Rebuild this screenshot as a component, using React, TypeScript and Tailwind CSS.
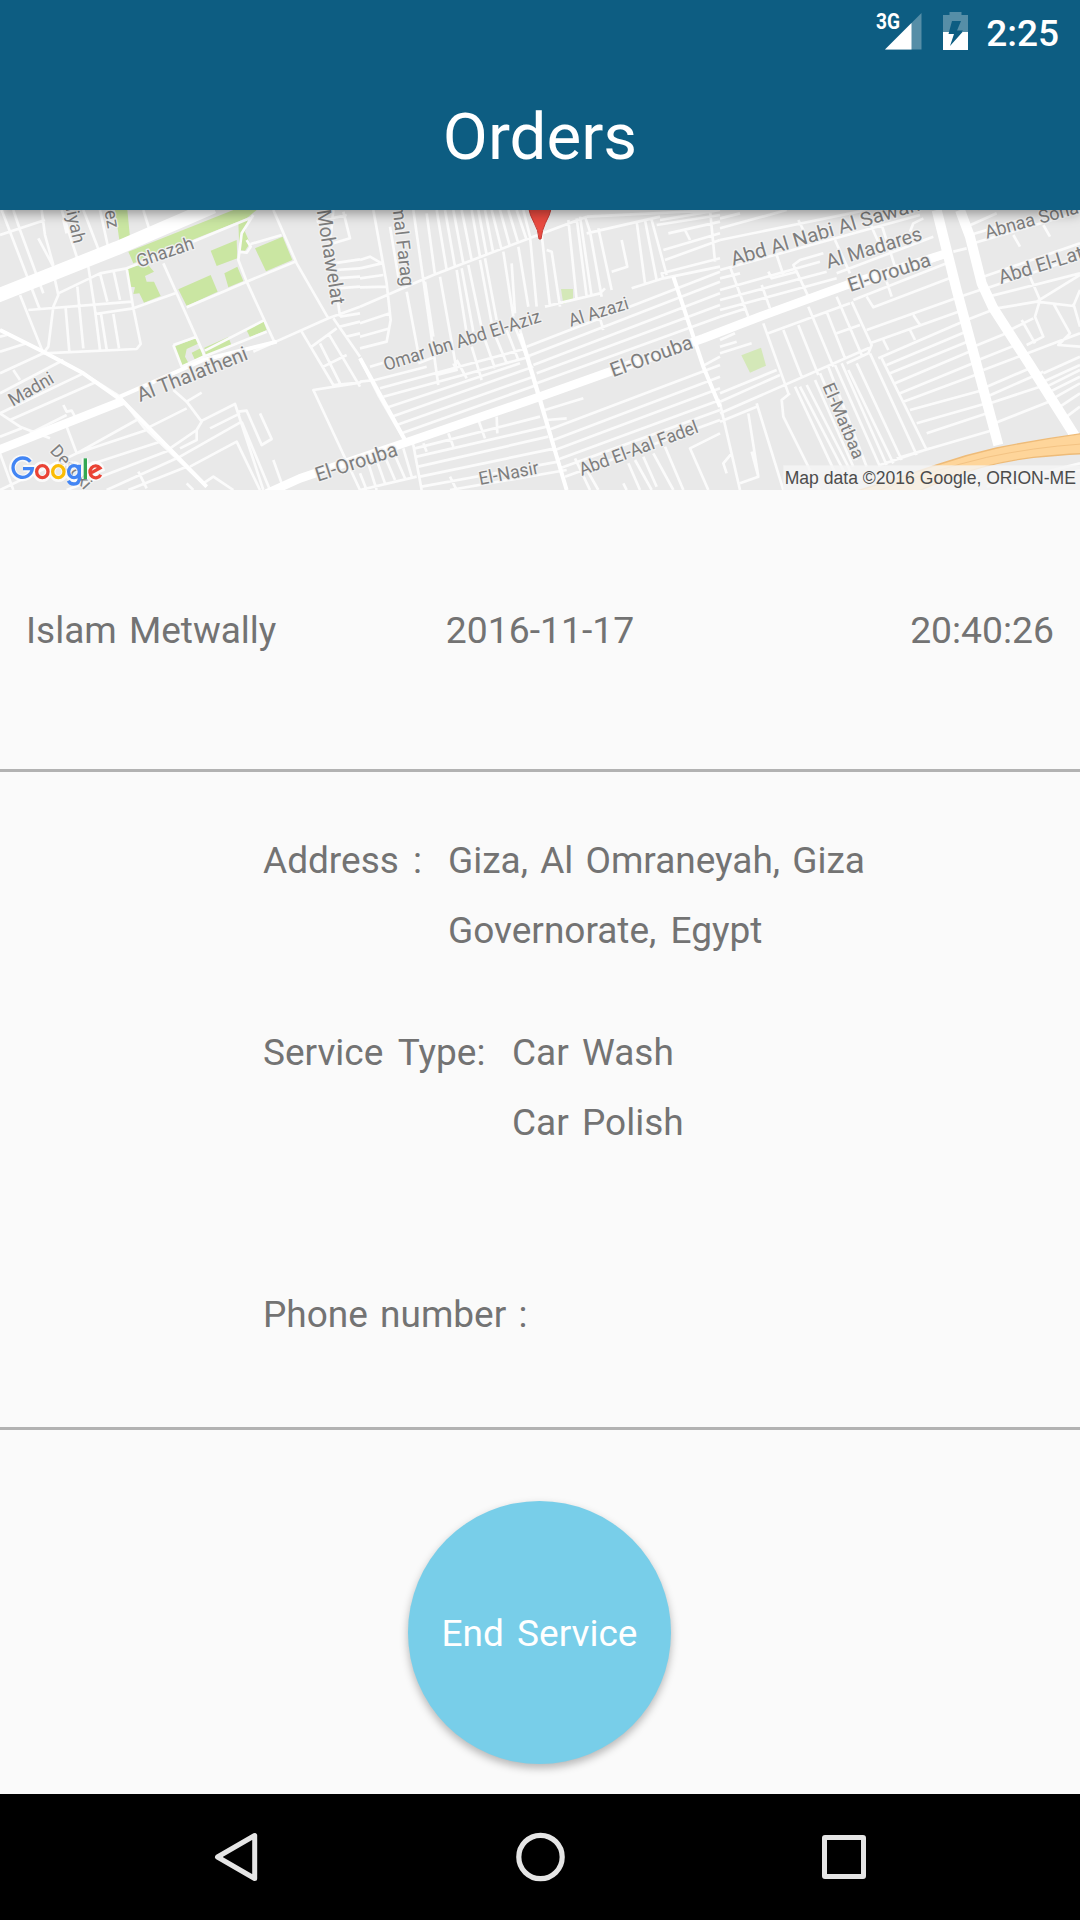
const westMinor = `
M0 30M5 30L120 330M40 30L60 90L130 280M0 105L135 60M125 30L135 105L160 195M115 115L160 200M185 30L235 185M190 60L200 100M250 30L300 160M300 30L325 145
M430 30L450 95M60 285L130 460M165 240L175 285L160 320L145 440L130 460L410 447L422 432L400 325L380 205
M85 330L395 305M175 280L300 220L380 205M265 200L285 330L300 450M300 220L322 305M340 210L360 300M232 260L250 445M197 325L208 455M285 342L400 325M303 342L320 448M340 342L357 445
M400 325L530 278M490 190L615 470M380 205L470 170L760 50M760 45L725 100L715 180L740 245L825 430M560 322L740 245L885 185M820 30L890 190L985 355M715 155L740 158L752 140L740 120M752 132L845 105
M520 435L590 410M615 452L790 362M520 435L545 500L610 470L800 395M760 455L985 355L1080 320
M0 390L130 455L250 520L360 590L430 680L620 860M0 455L80 430M0 410L20 405M0 520L130 460M0 580L190 480M40 510L60 540M0 640L250 520M30 660L290 545M0 710L65 685M0 640L60 680L150 715M90 700L200 645M190 615L200 635L215 632L225 650M200 680L230 760M0 870L230 760L410 660M230 760L440 690M250 800L480 725M200 870L510 750M320 870L540 770M385 870L560 800M0 760L40 870
M415 815L440 865M560 850L580 870M520 570L560 605L605 665L590 690L510 745M560 605L605 578M440 685L560 625M600 665L705 612L790 870M630 685L720 640M590 690L590 720L540 745M540 770L725 665M570 800L710 725L780 870M715 635L740 632L785 735L815 717L780 640M725 665L810 870M820 780L845 850M610 850L640 830L700 870
M905 395L1000 555L1080 548L940 570L1080 870M935 440L1010 385M960 430L1020 550M985 400L1080 560M970 500L1040 465M1000 355L1080 470
M1000 30L990 130L1020 350M1030 35L1050 115L1000 130M1000 190L1080 178M1005 210L1080 205M1005 235L1080 230M1010 265L1080 260M1020 350L1080 340M1020 380L1080 365M1040 410L1080 400M950 65L1040 45`

const centreMinor = `
M40 30L80 250L92 360L80 425L0 445M0 180L30 170L65 190M0 205L65 190M0 235L70 225M0 262L80 260M0 370L90 340M0 410L90 385M0 320L220 225L520 110L680 50
M90 80L120 260M160 30L190 240L235 555M200 40L225 225M230 30L260 210M255 30L285 200M280 30L310 190M305 30L335 180M335 30L360 170M355 30L380 165M375 30L400 160M395 30L425 150M420 30L450 140M445 30L475 130M470 30L500 120M490 30L510 110
M140 275L175 460M195 245L220 410M240 230L290 510M290 210L320 400M305 205L340 395M325 195L365 385M360 180L395 370M375 175L410 360M430 155L460 350M455 190L465 340M475 140L505 320M510 110L530 320M545 105L570 320M560 150L575 155L600 320M625 60L650 300M650 55L680 290M660 50L695 290M675 50L690 95L725 290M715 85L755 270M785 120L802 200L755 215M830 65L855 250M855 60L890 240M875 60L920 225M680 100L900 50M555 320L720 280L735 265
M680 50L1080 30M900 60L1080 30M890 75L1080 45M925 100L1080 65M910 150L1080 100M915 180L1080 120M1050 30L1065 185M975 90L990 120M815 265L910 235L905 220L1080 175M910 235L1080 200
M0 545L45 540M0 475L55 585L130 715L160 735L185 870M30 500L80 485M45 540L200 500M60 565L500 445M70 590L510 470M75 625L480 490M95 650L520 500M110 675L520 530M125 700L530 555
M175 490L225 470M230 525L290 510L280 490M290 480L320 535M335 440L365 540M375 420L405 505M405 405L440 490M440 390L475 480M465 380L500 470M480 390L540 590L620 870
M500 440L1080 215M500 470L1080 245M520 495L1080 280M530 520L1080 315M530 550L1080 350M720 355L730 390M940 230L1030 500L1080 620M555 630L670 595M560 660L620 655M565 690L1080 495M580 720L1080 530M585 750L1080 565M590 780L1080 600M600 805L1080 630M615 830L1080 660
M165 745L540 650M170 770L560 680M175 800L565 710M180 830L585 745M185 860L595 785M270 870L620 810M190 730L200 755M265 700L280 740M355 660L375 715M410 650L412 700M270 830L290 870M0 820L20 870M25 790L50 870M50 780L75 850M75 770L105 840M100 755L135 835M130 745L155 830M0 870L170 830M645 775L690 870M675 800L715 870M790 850L800 870M805 790L840 870M825 780L875 870M850 770L890 860M915 740L970 870M880 760L940 870M1045 870L990 745L1080 700M1025 500L1080 470`

const eastMinor = `
M0 55L60 40M0 85L200 30M0 120L440 30M0 210L600 45M0 235L60 220M0 270L300 185M0 300L320 215M0 330L350 235M0 350L80 325M350 220L640 110M400 300L680 190M390 270L690 165
M30 200L85 350M125 255L150 325M145 215L155 235L230 215M170 165L190 225M230 215L220 195L240 180L310 160M235 60L250 90M230 215L265 290M345 120L390 220M450 70L490 160M485 75L525 200M500 245L515 290M570 95L580 70L610 55M440 290L460 322L700 230
M130 370L205 580M190 390L245 530M235 375L295 525M265 320L340 500M320 335L375 475M350 290L425 465M395 305L455 435L445 460L380 490M145 400L390 310M350 400L420 375M440 390L720 290M450 430L730 330M580 345L600 375M570 390L585 420M490 420L505 450M475 475L740 360M500 495L750 390M510 520L755 420M525 550L760 450M540 580L770 485M550 605L780 520M570 630L790 570M590 670L800 610M620 700L815 635M530 775L820 690M480 795L630 745
M0 580L170 510M0 605L180 525M0 640L455 440M0 665L110 620M0 420L45 400M0 440L50 425M0 460L95 430M0 610L60 870M85 640L115 830L60 850M110 610L190 870M20 820L10 790L35 760M95 755L115 830M210 580L185 600L190 650L300 870M225 560L360 850M240 560L385 840M260 555L400 830M285 540L400 800M300 520L410 780M325 500L440 800M345 495L480 800M365 490L500 795M385 510L520 790M410 490L545 780M450 460L590 765M485 475L620 750
M700 155L740 145M740 80L830 40M750 105L900 60M760 130L1080 35M790 230L1080 130M800 265L1080 170M805 290L1080 220M970 75L990 110M880 105L900 140M720 290L780 270M740 360L830 325L950 305L1060 318L1080 270M930 230L960 300L945 350L970 410L920 435M950 305L1080 225M1000 310L1050 400L1015 435L1080 440M1060 310L1080 380M905 360L945 430M870 390L940 355M760 440L870 395M775 480L900 430M790 510L1080 400M790 565L940 500M800 590L970 515M810 610L960 560M810 675L1000 600M970 520L1080 470M970 545L1080 495M980 560L1080 510M990 575L1080 530M1000 595L1080 550M1020 620L1080 580M1040 650L1080 620M800 860L1080 790M860 870L1080 810`

type LabelProps = { x: number; y: number; angle: number; size: number; length?: number; children: string }

function StreetLabel({ x, y, angle, size, length, children }: LabelProps) {
  return (
    <text
      transform={`translate(${x} ${y}) rotate(${angle})`}
      fontSize={size}
      textLength={length}
      lengthAdjust="spacingAndGlyphs"
      fill="#7e7e7e"
      stroke="#f1f1f1"
      strokeWidth="8"
      strokeLinejoin="round"
      paintOrder="stroke"
    >
      {children}
    </text>
  )
}

function CityMap() {
  return (
    <svg className="block h-[280px] w-[1080px]" viewBox="0 30 3240 840" fontFamily="Roboto, sans-serif">
      <rect y="30" width="3240" height="840" fill="#e9e9e9" />
      <g fill="#cae6a2">
        <path d="M345 30H382L390 112L358 120ZM385 155L700 30H770L740 55L400 190ZM380 205L440 190L462 215L435 228L440 245L462 245L482 288L432 308L418 280L400 282L405 262L390 260ZM632 152L710 120L712 175L650 198ZM715 65L745 55L735 95L750 130L735 152L718 150ZM765 145L848 110L877 180L798 214ZM535 268L632 225L653 275L560 318ZM673 220L712 200L730 243L685 262ZM522 440L590 413L597 430L560 447L555 470L565 488L542 498ZM575 458L603 444L608 468L585 480ZM613 443L685 411L694 434L618 467ZM738 387L790 363L800 390L750 412Z" />
        <path fill="#d4e8b8" d="M1683 267H1719V300L1690 312ZM2224 466L2283 443L2298 497L2250 518Z" />
      </g>
      <g fill="none" stroke="#fbfbfb" strokeWidth="8" strokeLinejoin="round">
        <path d={westMinor} />
        <path d={centreMinor} transform="translate(1080 0)" />
        <path d={eastMinor} transform="translate(2160 0)" />
      </g>
      <g fill="none" stroke="#ffffff" strokeLinejoin="round">
        <path strokeWidth="42" d="M-10 288L350 145L640 20" />
        <path strokeWidth="26" d="M-10 752L370 602" />
        <path strokeWidth="12" d="M360 590L610 480L830 425M0 390L130 455L250 520L370 605L620 860M1080 475L1215 720M1560 400L1700 870M2020 230L2110 500L2160 620" />
        <path strokeWidth="26" d="M800 880L900 835L1240 720L1620 590L2110 415L2280 350L2540 255L2840 160" />
        <path strokeWidth="30" d="M2810 30L2870 270L2995 735M2880 30L2910 110L2945 250L2980 325L3090 495L3225 708" />
      </g>
      <path d="M2560 876Q2680 840 2810 795Q2900 764 2990 744Q3120 718 3245 701V761Q3180 764 3100 772Q2960 790 2860 830Q2800 852 2750 876Z" fill="#fed59a" stroke="#eebb78" strokeWidth="4" />
      <path d="M2640 870Q2800 810 2960 772Q3100 742 3245 732" fill="none" stroke="#f3c384" strokeWidth="3" />
      <StreetLabel x={417} y={203} angle={-19} size={55} length={178}>Ghazah</StreetLabel>
      <StreetLabel x={420} y={606} angle={-21.5} size={60} length={352}>Al Thalatheni</StreetLabel>
      <StreetLabel x={38} y={620} angle={-30} size={55} length={147}>Madni</StreetLabel>
      <StreetLabel x={182} y={-42} angle={77.500} size={54}>Haliyah</StreetLabel>
      <StreetLabel x={300} y={-44} angle={80} size={54}>Moez</StreetLabel>
      <StreetLabel x={950} y={32} angle={81} size={60} length={287}>Mohawelat</StreetLabel>
      <StreetLabel x={148} y={754} angle={48} size={52}>Desoki</StreetLabel>
      <StreetLabel x={953} y={845} angle={-18} size={60} length={256}>El-Orouba</StreetLabel>
      <StreetLabel x={1169} y={-53} angle={83.500} size={56}>Gamal Farag</StreetLabel>
      <StreetLabel x={1157} y={513} angle={-17.5} size={55} length={492}>Omar Ibn Abd El-Aziz</StreetLabel>
      <StreetLabel x={1712} y={380} angle={-17} size={54} length={185}>Al Azazi</StreetLabel>
      <StreetLabel x={1839} y={532} angle={-20} size={60} length={259}>El-Orouba</StreetLabel>
      <StreetLabel x={1440} y={855} angle={-11} size={55} length={182}>El-Nasir</StreetLabel>
      <StreetLabel x={1745} y={828} angle={-20.5} size={55} length={377}>Abd El-Aal Fadel</StreetLabel>
      <StreetLabel x={2199} y={197} angle={-16.5} size={59} length={588}>Abd Al Nabi Al Sawah</StreetLabel>
      <StreetLabel x={2485} y={206} angle={-17} size={60} length={298}>Al Madares</StreetLabel>
      <StreetLabel x={2551} y={276} angle={-18} size={59} length={258}>El-Orouba</StreetLabel>
      <StreetLabel x={2467} y={558} angle={67} size={53} length={242}>El-Matbaa</StreetLabel>
      <StreetLabel x={2960} y={116} angle={-15.5} size={55} length={320}>Abnaa Sohag</StreetLabel>
      <StreetLabel x={3002} y={252} angle={-17} size={58}>Abd El-Latif</StreetLabel>
      <path d="M1585 20H1655Q1650 45 1636 70Q1626 90 1623 117H1617Q1615 90 1603 70Q1589 45 1585 20Z" fill="#ea4a40" stroke="#c53a34" strokeWidth="3" />
      <rect x="2350" y="796" width="890" height="74" fill="#f5f5f5" fillOpacity="0.8" />
      <text x="2354" y="851" fontFamily="Liberation Sans, sans-serif" fontSize="54" textLength="874" lengthAdjust="spacingAndGlyphs" fill="#4c4c4c">Map data ©2016 Google, ORION-ME</text>
      <g fill="none" strokeWidth="11" stroke="#ffffff" strokeOpacity="0.75">
        <path strokeWidth="20" d="M91 786A30 30 0 1 0 97 805H70M126 794A19 21 0 1 0 127 794M175 794A19 21 0 1 0 176 794M221 794A18 21 0 1 0 222 794M255 775V837M300 825A18 20 0 1 1 303 806L274 817" />
      </g>
      <g fill="none" strokeWidth="10">
        <path stroke="#4285f4" d="M91 785A29 29 0 1 0 97 806H69" />
        <ellipse cx="127" cy="815" rx="17" ry="18" stroke="#ea4335" />
        <ellipse cx="175" cy="815" rx="17" ry="18" stroke="#fbbc05" />
        <path stroke="#4285f4" d="M238 815A16 18 0 1 1 206 815A16 18 0 1 1 238 815M238 794V833Q238 852 221 852Q210 852 205 842" />
        <path stroke="#34a853" d="M256 775V837" />
        <path stroke="#ea4335" d="M302 824A17 18 0 1 1 300 804L275 818" />
      </g>
    </svg>
  )
}

function StatusBar() {
  return (
    <div className="flex h-[66px] items-start justify-end pr-[21px] text-white">
      <svg className="h-[66px] w-[110px]" viewBox="870 0 110 66" fontFamily="Roboto, sans-serif">
        <text x="876" y="29" fontSize="22" fontWeight="700" textLength="24" lengthAdjust="spacingAndGlyphs" fill="#ffffff">3G</text>
        <path d="M921.500 13V49.500H885Z" fill="#ffffff" fillOpacity="0.3" />
        <path d="M911.500 23V49.500H885Z" fill="#ffffff" />
        <path fillRule="evenodd" d="M943 32V15H949.500V12H961.500V15H968V32H961.500L963 30.500H957L961 21H952L949 32Z" fill="#ffffff" fillOpacity="0.3" />
        <path fillRule="evenodd" d="M943 32H949L948.500 34H954L950 46L962.500 32H968V50H943Z" fill="#ffffff" />
      </svg>
      <span className="ml-[6px] mt-[11px] text-[37px] font-medium leading-[46px]">2:25</span>
    </div>
  )
}

export default function App() {
  return (
    <div className="flex h-[1920px] w-[1080px] flex-col overflow-hidden bg-[#fafafa] font-[Roboto,sans-serif] text-[37px] leading-[70px] text-[#737373]">
      <header className="relative z-10 h-[210px] shrink-0 bg-[#0d5d82] shadow-[0_3px_12px_rgba(0,0,0,0.4)]">
        <StatusBar />
        <h1 className="pt-[31px] text-center text-[65.500px] leading-[80px] text-white">Orders</h1>
      </header>
      <CityMap />
      <section className="grid h-[282px] shrink-0 grid-cols-3 items-center border-b-3 border-[#b2b2b2] px-[26px] pt-[2px] [word-spacing:3px]">
        <span>Islam Metwally</span>
        <span className="pb-[2px] text-center text-[37.300px]">2016-11-17</span>
        <span className="pb-[2px] text-right text-[37.300px]">20:40:26</span>
      </section>
      <section className="flex h-[658px] shrink-0 flex-col border-b-3 border-[#b2b2b2] pl-[263px] pt-[54px] [word-spacing:3px]">
        <div className="flex h-[192px]">
          <span className="w-[185px] [word-spacing:5px]">Address :</span>
          <p className="w-[440px]">
            Giza, Al Omraneyah, Giza <span className="[word-spacing:5px]">Governorate, Egypt</span>
          </p>
        </div>
        <div className="flex h-[262px]">
          <span className="w-[249px] [word-spacing:6px]">Service Type:</span>
          <ul className="[word-spacing:4px]">
            <li>Car Wash</li>
            <li>Car Polish</li>
          </ul>
        </div>
        <span>Phone number :</span>
      </section>
      <main className="flex grow justify-center pr-px pt-[71px]">
        <button className="size-[263px] rounded-full bg-[#78cee9] pt-[2px] text-white shadow-[0_4px_8px_rgba(0,0,0,0.28)] [word-spacing:4px]">
          End Service
        </button>
      </main>
      <nav className="flex h-[126px] shrink-0 items-center justify-between bg-black pl-[213px] pr-[212px]">
        <svg className="size-[50px]" viewBox="0 0 50 50" fill="none" stroke="#e5e5e5" strokeWidth="5" strokeLinejoin="round">
          <path d="M41.700 3.500V46.500L4.500 25Z" />
        </svg>
        <svg className="size-[50px]" viewBox="0 0 50 50" fill="none" stroke="#e5e5e5" strokeWidth="5.200">
          <circle cx="24.500" cy="25" r="21.700" />
        </svg>
        <svg className="size-[50px]" viewBox="0 0 50 50" fill="none" stroke="#e5e5e5" strokeWidth="5" strokeLinejoin="round">
          <rect x="6.500" y="5.500" width="39" height="39" rx="0.500" />
        </svg>
      </nav>
    </div>
  )
}
